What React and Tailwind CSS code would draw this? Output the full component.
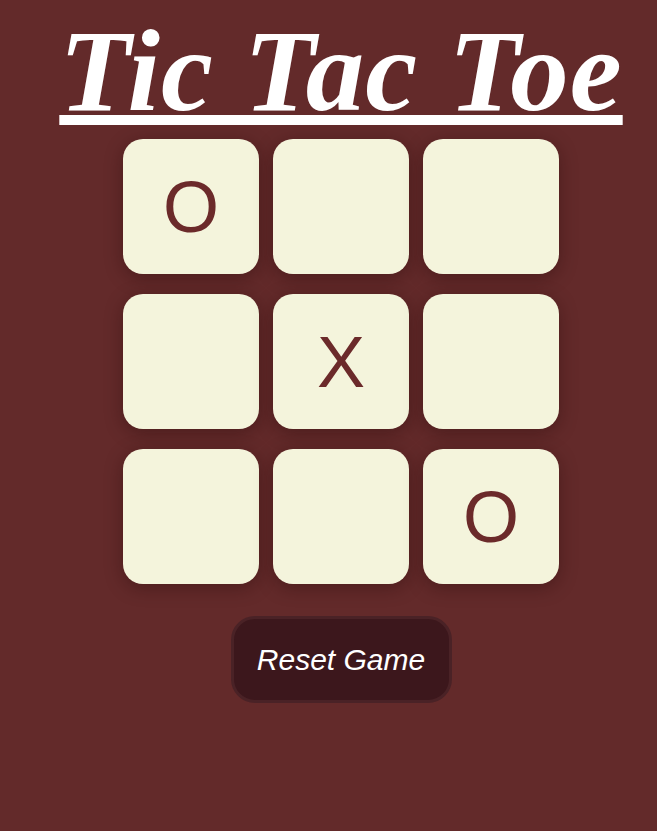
import { useState } from 'react'

const start = ['O', '', '', '', 'X', '', '', '', 'O']

export default function App() {
  const [board, setBoard] = useState(start)

  const reset = () => setBoard(Array(9).fill(''))

  return (
    <main className="min-h-screen w-full bg-[#632a2a] pl-[25px] flex flex-col items-center font-['Liberation_Sans',Arial,sans-serif]">
      <h1 className="mt-[11px] text-white font-bold italic underline decoration-[10px] underline-offset-[5px] text-[117px] leading-[120px] tracking-[1px] whitespace-nowrap font-['Liberation_Serif','Times_New_Roman',serif]">
        Tic Tac Toe
      </h1>
      <div className="mt-[8px] grid grid-cols-3 gap-x-[14px] gap-y-[20px]">
        {board.map((v, i) => (
          <button
            key={i}
            className="w-[136px] h-[135px] rounded-[20px] bg-[#f4f4dc] shadow-[0_4px_18px_rgba(40,10,10,0.4)] flex items-center justify-center text-[72px] text-[#6b2a2a]"
          >
            {v}
          </button>
        ))}
      </div>
      <button
        onClick={reset}
        className="mt-[32px] w-[221px] h-[87px] rounded-[24px] bg-[#3c171c] border-[3px] border-[#4a2226] text-white italic text-[30px]"
      >
        Reset Game
      </button>
    </main>
  )
}
